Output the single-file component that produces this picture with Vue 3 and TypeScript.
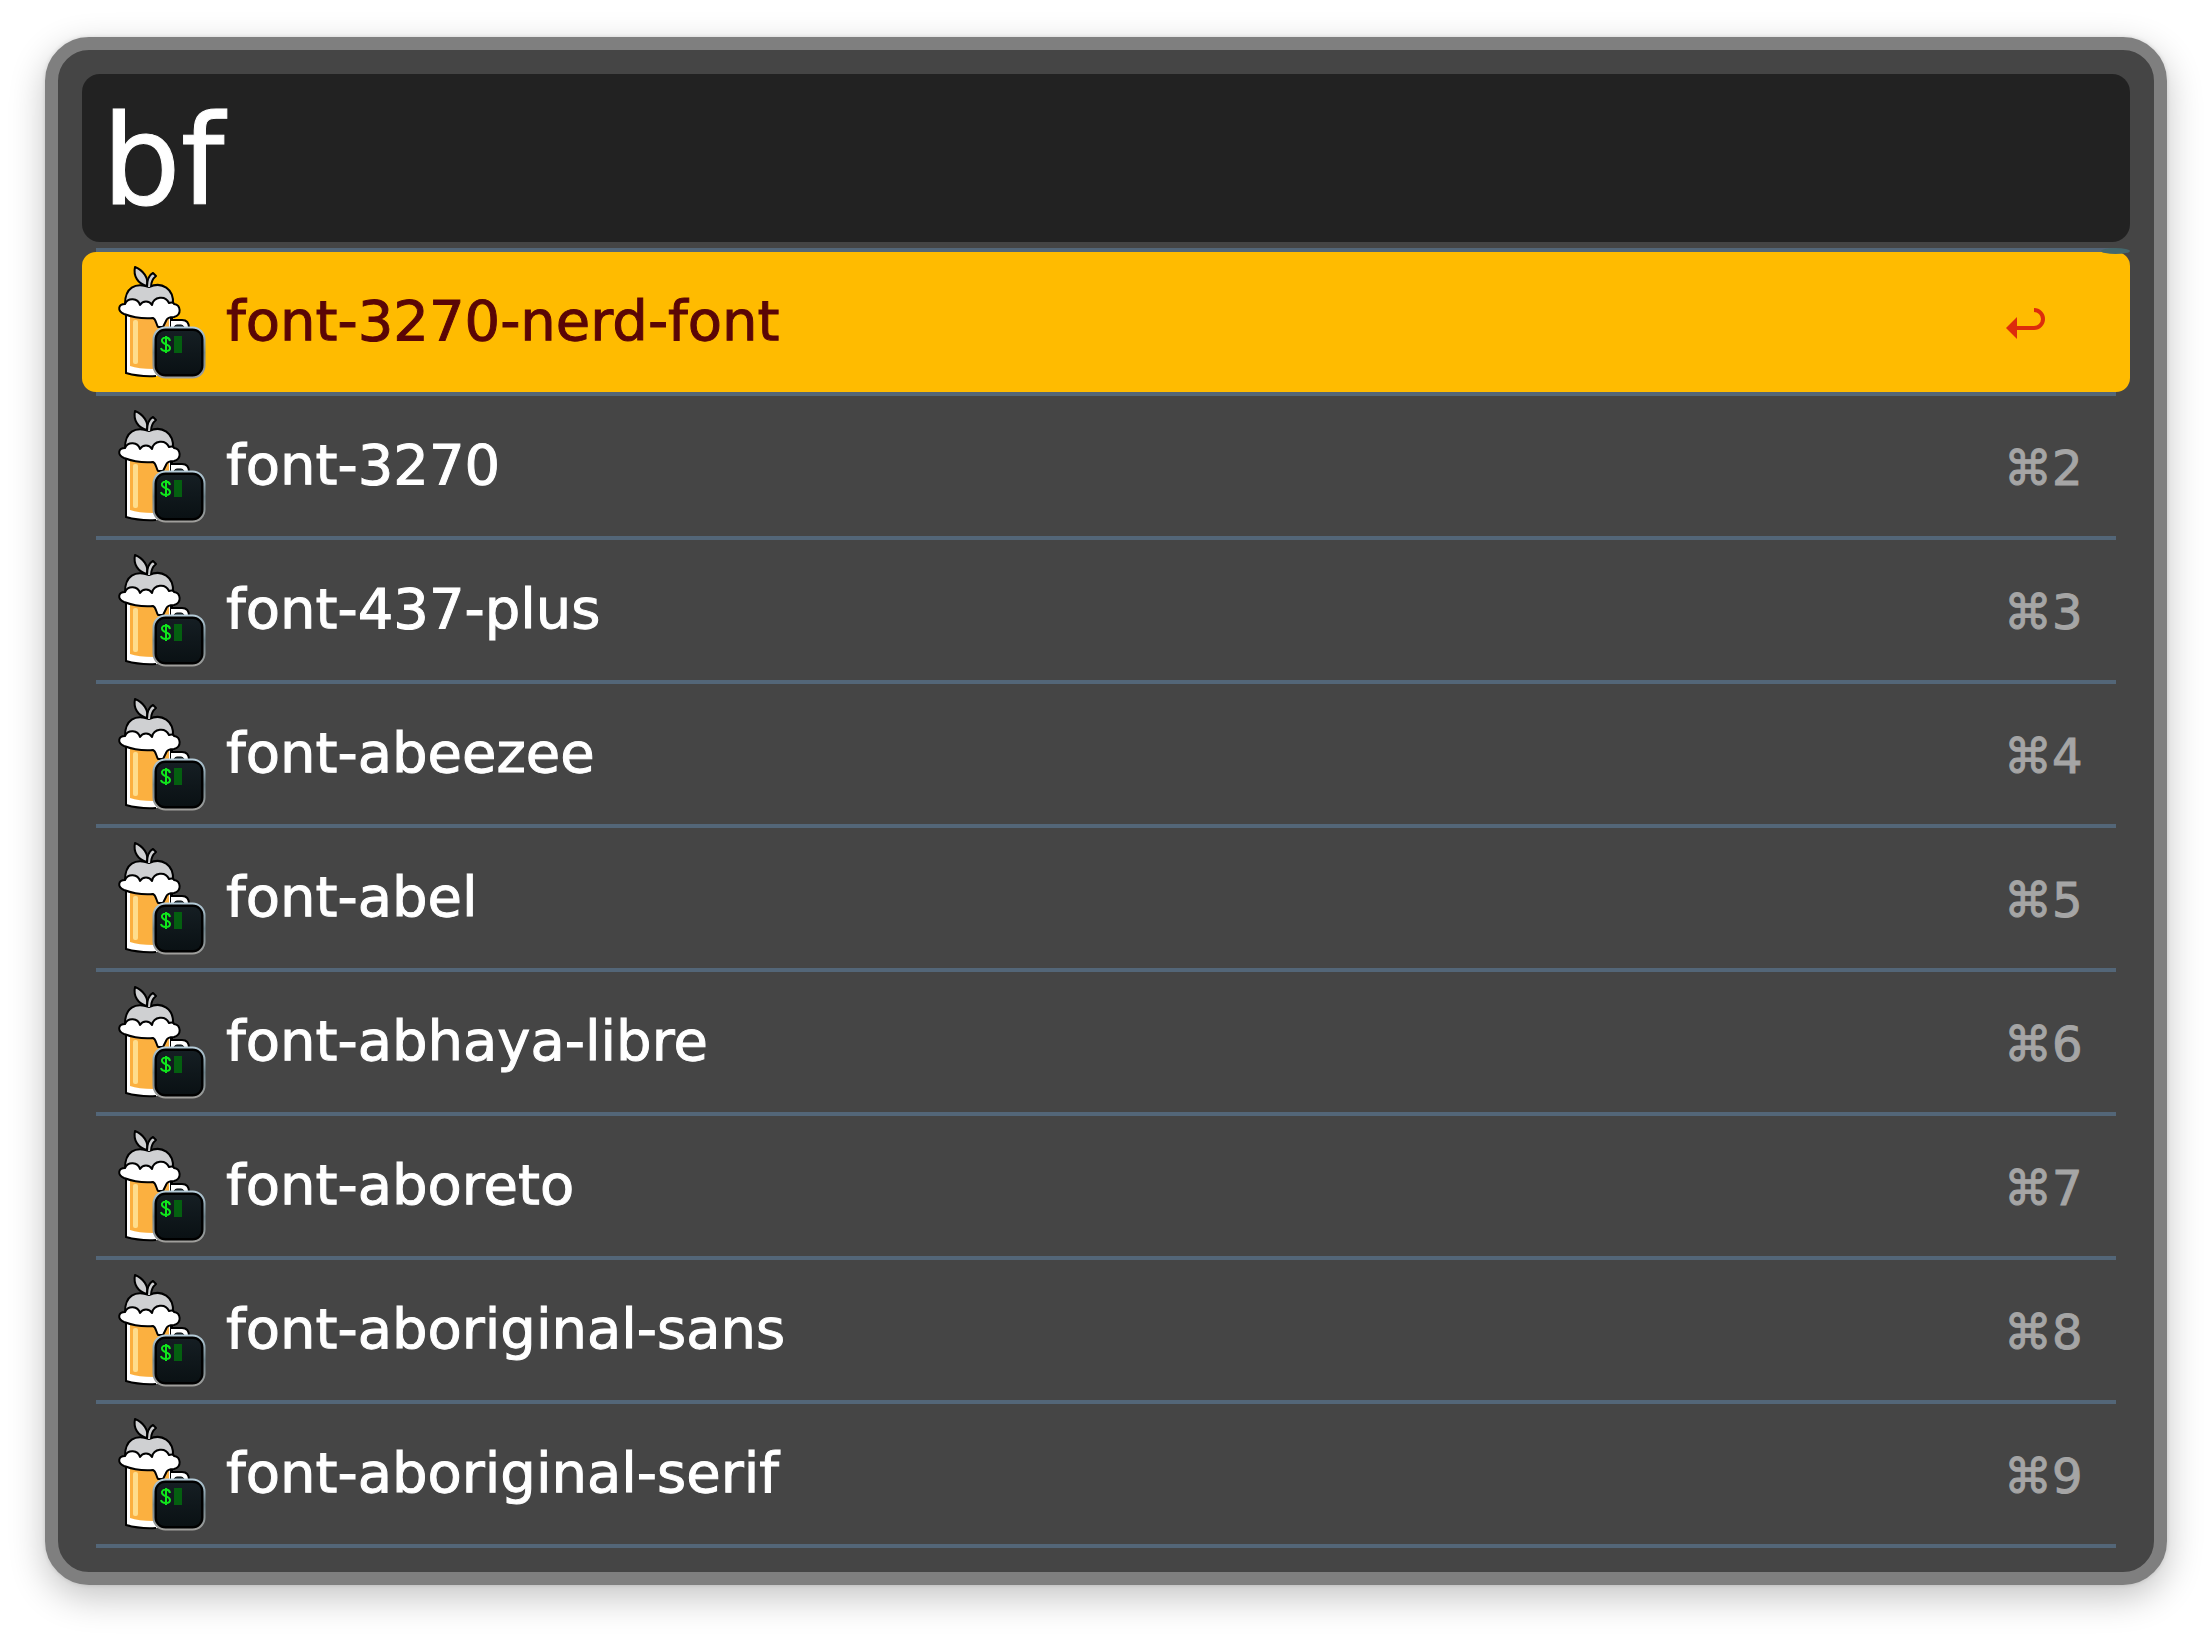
<script setup lang="ts">
import { ref } from 'vue'

const query = ref('bf')
const selected = ref(0)
const results: string[] = [
  'font-3270-nerd-font',
  'font-3270',
  'font-437-plus',
  'font-abeezee',
  'font-abel',
  'font-abhaya-libre',
  'font-aboreto',
  'font-aboriginal-sans',
  'font-aboriginal-serif',
]
</script>

<template>
  <div class="page">
    <main class="launcher">
      <input v-model="query" class="search" type="text" aria-label="Search" spellcheck="false" />
      <div class="list-wrap">
        <ul class="results">
          <li v-for="(name, i) in results" :key="name">
            <button type="button" class="row" :class="{ active: i === selected }" @click="selected = i">
              <svg class="icon" viewBox="0 0 96 124" aria-hidden="true">
                <defs>
                  <linearGradient id="rim" x1="0" y1="0" x2="0" y2="1">
                    <stop offset="0" stop-color="#b4cbd8" />
                    <stop offset="0.5" stop-color="#6f858e" />
                    <stop offset="1" stop-color="#a09f9c" />
                  </linearGradient>
                  <linearGradient id="screen" x1="0" y1="0" x2="0" y2="1">
                    <stop offset="0" stop-color="#151e23" />
                    <stop offset="1" stop-color="#0a1114" />
                  </linearGradient>
                </defs>
                <!-- mug handle -->
                <path d="M60 52 V58 H70 Q77 58 77 66 V80 H58 V52 Z" fill="#fff" stroke="#000" stroke-width="2" />
                <path d="M62 65 Q63 63 65 63 H69 Q71 63 72 65 Z" fill="#2b4650" stroke="#000" />
                <!-- glass and beer -->
                <path d="M14 50 V111 Q28 115 44 114 L58 112 V50 Z" fill="#fff" />
                <path d="M14 50 V111 Q28 115 44 114" fill="none" stroke="#000" stroke-width="2" />
                <path d="M18 52 V104 Q26 107 42 107 H57 V52 Z" fill="#fbb040" />
                <rect x="21" y="58" width="5" height="44" rx="2" fill="#fedd8c" />
                <!-- apple -->
                <path d="M13 42 C13 26 23 20 37 25 C50 19 62 27 61 42 L55 48 H18 Z" fill="#cfd0d2" stroke="#000" stroke-width="2" />
                <path d="M23 5 C31 8 37 16 35 24 C26 22 21 14 23 5 Z" fill="#cfd0d2" stroke="#000" stroke-width="2" stroke-linejoin="round" />
                <path d="M35 25 Q35 14 41 11 L44 14 Q39 18 39 25" fill="#cfd0d2" stroke="#000" stroke-width="2" stroke-linejoin="round" />
                <!-- foam -->
                <path d="M13 42 A8 8 0 0 1 28 43 A7 7 0 0 1 40 43 A9 9 0 0 1 57 41 C60 40 62 41 62 42 C69 43 70 53 62 55 Q55 55 54 59 L51 65 H46 C44 62 44 57 41 56 C29 57 20 55 12 52 C5 49 6 42 13 42 Z" fill="#fff" stroke="#000" stroke-width="2" stroke-linejoin="round" />
                <!-- terminal badge -->
                <rect x="41.500" y="65.500" width="51" height="50" rx="12" fill="#000" stroke="url(#rim)" stroke-width="2" />
                <rect x="45" y="69" width="44" height="43" rx="8" fill="url(#screen)" />
                <path d="M58 79 C57 74 49 75 50 79 C51 83 58 82 58 86 C58 90 50 90 49 86 M54 74 V91" fill="none" stroke="#10e81c" stroke-width="2" />
                <rect x="62" y="74" width="8" height="17" fill="#045f10" />
              </svg>
              <span class="title">{{ name }}</span>
              <span class="shortcut">
                <svg v-if="i === selected" class="return" viewBox="0 0 40 32" role="img" aria-label="Return">
                  <path d="M28 2 A9 9 0 0 1 28 20 H11" fill="none" stroke="#dd2c0c" stroke-width="4" />
                  <path d="M0 20 L11 9 V31 Z" fill="#dd2c0c" />
                </svg>
                <template v-else>⌘{{ i + 1 }}</template>
              </span>
            </button>
          </li>
        </ul>
        <span class="thumb"></span>
      </div>
    </main>
  </div>
</template>

<style>
body {
  background: #fff;
}
</style>

<style scoped>
.page {
  padding: 37px 45px 52px;
}
.launcher {
  padding: 24px;
  border: 13px solid #7f7f7f;
  border-radius: 44px;
  background: #454545;
  box-shadow: 0 12px 36px rgba(0, 0, 0, 0.24), 0 0 4px rgba(0, 0, 0, 0.12);
  font-family: "DejaVu Sans", "Liberation Sans", sans-serif;
}
.search {
  display: block;
  box-sizing: border-box;
  width: 100%;
  height: 168px;
  padding: 6px 20px 0;
  border: 0;
  border-radius: 18px;
  outline: 0;
  background: #222;
  color: #fff;
  font: 124px "DejaVu Sans", "Liberation Sans", sans-serif;
  -webkit-text-stroke: 1px currentColor;
}
.list-wrap {
  position: relative;
  margin-top: 6px;
}
.results {
  margin: 0;
  padding: 0;
  list-style: none;
}
.results::before,
.results li::after {
  content: "";
  display: block;
  height: 4px;
  margin: 0 14px;
  background: #536678;
}
.row {
  display: flex;
  align-items: center;
  width: 100%;
  height: 140px;
  padding: 0 48px 0 30px;
  border: 0;
  border-radius: 14px;
  background: transparent;
  color: #fff;
  font: 56px "DejaVu Sans", "Liberation Sans", sans-serif;
  text-align: left;
}
.row.active {
  background: #fb0;
  color: #5a0606;
}
.icon {
  flex: none;
  width: 96px;
  height: 124px;
  margin-right: 18px;
  padding-top: 4px;
}
.title {
  flex: 1;
  padding-bottom: 2px;
  line-height: 72px;
  -webkit-text-stroke: 1px currentColor;
}
.shortcut {
  flex: none;
  width: 78px;
  padding-top: 4px;
  color: #a5a5a5;
  font-size: 48px;
  line-height: 64px;
  -webkit-text-stroke: 1px currentColor;
}
.return {
  display: block;
  width: 40px;
  height: 32px;
  margin-left: 2px;
}
.thumb {
  position: absolute;
  top: 0;
  right: 0;
  width: 29px;
  height: 6px;
  border-radius: 50%;
  background: #44676c;
}
</style>
